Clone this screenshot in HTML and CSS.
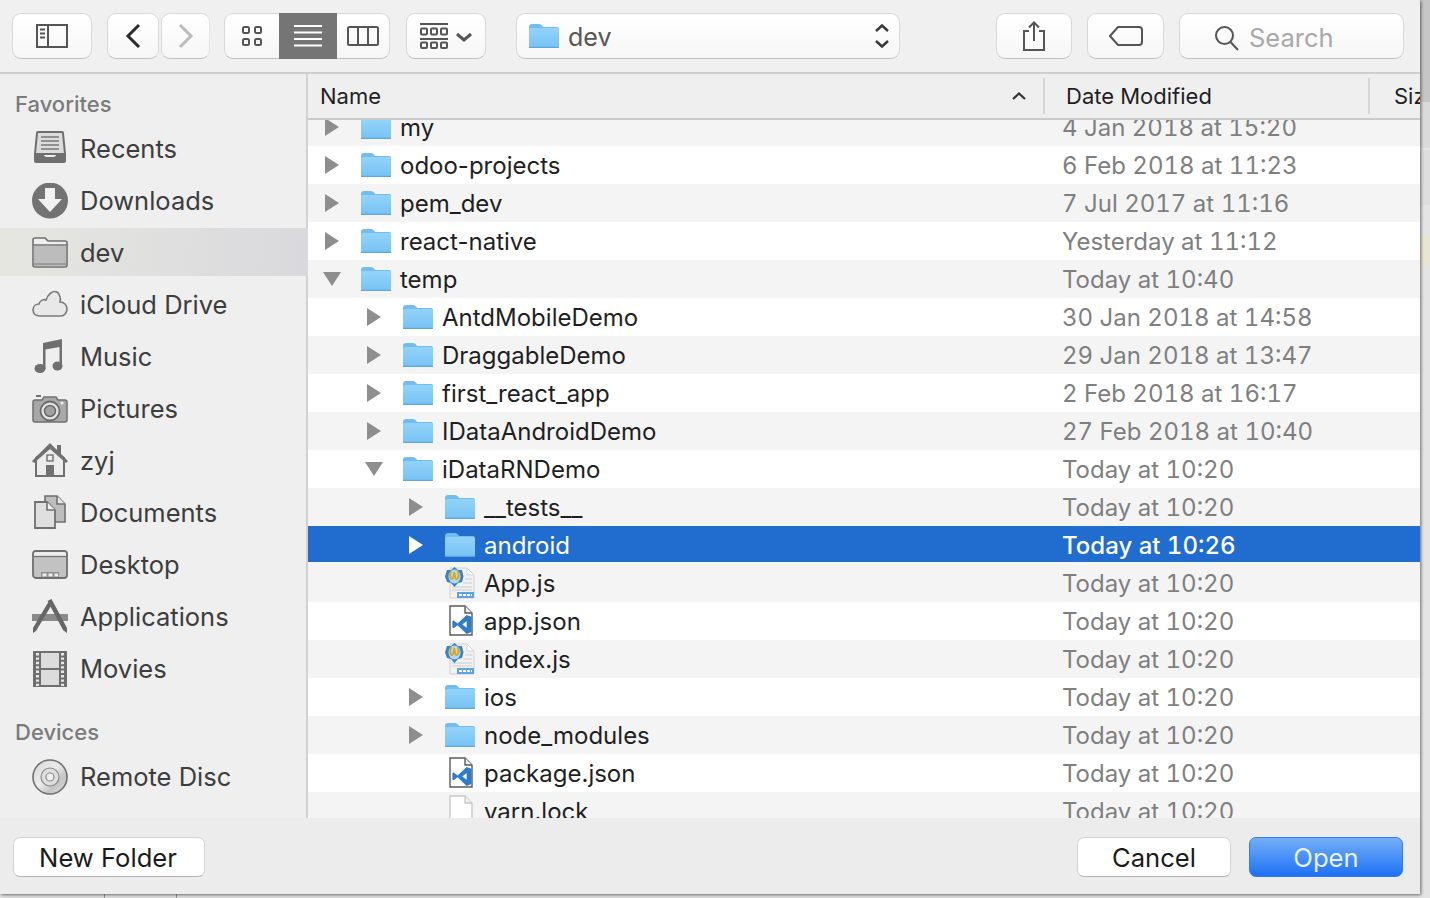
FILE: index.html
```html
<!DOCTYPE html>
<html lang="en">
<head>
<meta charset="UTF-8">
<title>Open - dev</title>
<link rel="stylesheet" href="styles.css">
</head>
<body>

<svg class="sprite" xmlns="http://www.w3.org/2000/svg">
  <defs>
    <linearGradient id="folderBody" x1="0" y1="0" x2="0" y2="1">
      <stop offset="0" stop-color="#93d3fa"/>
      <stop offset="1" stop-color="#78c3f5"/>
    </linearGradient>
    <linearGradient id="discFill" x1="0" y1="0" x2="1" y2="1">
      <stop offset="0" stop-color="#d4d4d4"/>
      <stop offset=".45" stop-color="#ececec"/>
      <stop offset=".7" stop-color="#c4c4c4"/>
      <stop offset="1" stop-color="#e2e2e2"/>
    </linearGradient>
  </defs>

  <!-- list icons -->
  <symbol id="tri" viewBox="0 0 18 18"><path d="M2 0 L16 9 L2 18 Z"/></symbol>
  <symbol id="triDown" viewBox="0 0 18 18"><path d="M0 2 L18 2 L9 16 Z"/></symbol>
  <symbol id="folder" viewBox="0 0 30 24">
    <path d="M0 3 Q0 0 3 0 H10 Q12 0 13 1.5 L14 3 H28 Q30 3 30 5 V22 Q30 24 28 24 H2 Q0 24 0 22 Z" fill="#72bdf0"/>
    <path d="M0 5.5 Q0 4 2 4 H28 Q30 4 30 5.5 V22 Q30 23 28.500 23 H1.500 Q0 23 0 22 Z" fill="url(#folderBody)"/>
    <rect x="0" y="22.800" width="30" height="1.200" rx=".6" fill="#5ea7da"/>
  </symbol>
  <symbol id="jsfile" viewBox="0 0 30 32">
    <path d="M5 1 H22 L29 8 V31 H5 Z" fill="#f1f1f1" stroke="#d2d2d2"/>
    <path d="M22 1 V8 H29 Z" fill="#fff" stroke="#d2d2d2"/>
    <path d="M7 23 H27 M7 20 H27 M18 16 H27 M20 12 H27" stroke="#d9d9d9" stroke-width="1.500"/>
    <path d="M9.500 0 L13 3 H17 L18.500 9.500 L17 15 L13 16 L9.500 20 L6 16 L2 15 L0 9.500 L2 3 H6 Z" fill="#3a80c8"/>
    <ellipse cx="9.500" cy="9.500" rx="6" ry="7" fill="#b4d8f0"/>
    <path d="M6 4 C4 10 6.500 15 8.500 10 C9 4 9.500 4 10 10 C11.500 15 15 10 13 4" fill="none" stroke="#d9a520" stroke-width="1.800"/>
    <rect x="12" y="25" width="17" height="6" fill="#5aa5dc"/>
    <path d="M14 28 H27" stroke="#fff" stroke-width="2" stroke-dasharray="3 1"/>
  </symbol>
  <symbol id="vsfile" viewBox="0 0 30 32">
    <path d="M5 1 H20 L27 8 V30 H5 Z" fill="#fff" stroke="#5b5b5b" stroke-width="1.400"/>
    <path d="M20 1 V8 H27" fill="#eee" stroke="#5b5b5b" stroke-width="1.400"/>
    <path transform="translate(5.5 8) scale(.95)" fill-rule="evenodd" fill="#2f7ccb" d="M17 2 L7.500 11 L3.500 8 L2 8.800 V15.200 L3.500 16 L7.500 13 L17 22 L22 20 V4 Z M17 8.500 V15.500 L12.500 12 Z"/>
  </symbol>
  <symbol id="blankfile" viewBox="0 0 30 32">
    <path d="M5 1 H20 L27 8 V31 H5 Z" fill="#fff" stroke="#c8c8c8" stroke-width="1.400"/>
    <path d="M20 1 V8 H27" fill="#f2f2f2" stroke="#c8c8c8" stroke-width="1.400"/>
  </symbol>

  <!-- sidebar icons -->
  <symbol id="sRecents" viewBox="0 0 36 36">
    <path d="M5 2 Q5 1 6 1 H30 Q31 1 31 2 L33 23 H3 Z" fill="#dcdcdc" stroke="#6e6e6e" stroke-width="2"/>
    <path d="M9 6 H27 M9 10 H27 M9 14 H27 M9 18 H27" stroke="#777" stroke-width="1.500"/>
    <path d="M2 22 H11 Q12 26 15 26 H21 Q24 26 25 22 H34 V30 Q34 32 32 32 H4 Q2 32 2 30 Z" fill="#6f6f6f"/>
  </symbol>
  <symbol id="sDownloads" viewBox="0 0 36 36">
    <circle cx="18" cy="17.500" r="18" fill="#737373"/>
    <path d="M13 5 H23 V16 H30 L18 29 L6 16 H13 Z" fill="#f1f1f1"/>
  </symbol>
  <symbol id="sFolder" viewBox="0 0 36 36">
    <path d="M1 5 Q1 3 3 3 H13 L16 6 H33 Q35 6 35 8 V30 Q35 32 33 32 H3 Q1 32 1 30 Z" fill="#efefef" stroke="#707070" stroke-width="1.600"/>
    <path d="M2 11 H34 V31 H2 Z" fill="#bcbcbc"/>
    <path d="M1.500 10 H34.500" stroke="#707070" stroke-width="1.400"/>
    <path d="M2 29 H34" stroke="#8d8d8d" stroke-width="1.400"/>
  </symbol>
  <symbol id="sCloud" viewBox="0 0 36 36">
    <path d="M8 29 C3 29 1 26 1 23 C1 19 4 17 7 17 C8 13 12 12 14 13 C16 7 21 3 25 5 C28 7 29 12 28 15 C32 15 35 18 35 22 C35 26 32 29 29 29 Z" fill="#e8e8e8" stroke="#7a7a7a" stroke-width="1.600"/>
  </symbol>
  <symbol id="sMusic" viewBox="0 0 36 36">
    <path d="M11 4 L30 0 V27 H27.500 V8 L13.500 10.500 V30 H11 Z" fill="#6f6f6f"/>
    <ellipse cx="8" cy="29.500" rx="5.500" ry="4.500" fill="#6f6f6f"/>
    <ellipse cx="25.500" cy="27" rx="5" ry="4.500" fill="#6f6f6f"/>
  </symbol>
  <symbol id="sCamera" viewBox="0 0 36 36">
    <path d="M3 9 H10 L12 6 H24 L26 9 H33 Q35 9 35 11 V29 Q35 31 33 31 H3 Q1 31 1 29 V11 Q1 9 3 9 Z" fill="#a8a8a8" stroke="#707070" stroke-width="1.500"/>
    <rect x="4" y="4" width="5" height="2" fill="#707070"/>
    <circle cx="18" cy="20" r="9.500" fill="#e4e4e4" stroke="#6a6a6a" stroke-width="1.800"/>
    <circle cx="18" cy="20" r="5.500" fill="#a2a2a2" stroke="#6a6a6a" stroke-width="1.500"/>
    <circle cx="30" cy="12" r="1.500" fill="#eee"/>
  </symbol>
  <symbol id="sHome" viewBox="0 0 36 36">
    <path d="M4 15 V33 H32 V15 L18 4 Z" fill="#ececec" stroke="#707070" stroke-width="2"/>
    <path d="M0 18 L18 0 L25 7 V2 H29 V11 L36 18 L34 20 L18 6 L2 20 Z" fill="#707070"/>
    <rect x="15" y="12" width="6" height="6" fill="#ececec" stroke="#707070" stroke-width="1.400"/>
    <rect x="14" y="22" width="8" height="11" fill="#707070"/>
  </symbol>
  <symbol id="sDocs" viewBox="0 0 36 36">
    <path d="M13 1 H25 L33 9 V27 H13 Z" fill="#bdbdbd" stroke="#707070" stroke-width="1.600"/>
    <path d="M25 1 V9 H33" fill="#e8e8e8" stroke="#707070" stroke-width="1.600"/>
    <path d="M3 7 H15 L23 15 V33 H3 Z" fill="#dfdfdf" stroke="#707070" stroke-width="1.800"/>
    <path d="M15 7 V15 H23" fill="#efefef" stroke="#707070" stroke-width="1.600"/>
  </symbol>
  <symbol id="sDesktop" viewBox="0 0 36 36">
    <rect x="1" y="4" width="34" height="27" rx="3" fill="#c2c2c2" stroke="#6f6f6f" stroke-width="1.800"/>
    <path d="M2 9 V7 Q2 5 4 5 H32 Q34 5 34 7 V9 Z" fill="#ededed"/>
    <path d="M2 9.500 H34" stroke="#6f6f6f" stroke-width="1.200"/>
    <path d="M9 25 H27 V30 H9 Z" fill="#8f8f8f"/>
    <path d="M10.500 28 H26" stroke="#eee" stroke-width="3" stroke-dasharray="4 2"/>
  </symbol>
  <symbol id="sApps" viewBox="0 0 36 36">
    <path d="M0 15 H36 V22 H0 Z" fill="#8a8a8a"/>
    <path d="M14 15 H22 L20.500 11 H15.500 Z" fill="#efefef"/>
    <path d="M1 34 L1 29 L17 2 L20.500 4.500 L4 32 Z" fill="#666"/>
    <path d="M35 34 L35 29 L19.500 0 L15.500 2 L31 31 Z" fill="#666"/>
  </symbol>
  <symbol id="sMovies" viewBox="0 0 36 36">
    <rect x="2" y="1" width="32" height="34" fill="#dcdcdc" stroke="#6f6f6f" stroke-width="2"/>
    <path d="M2 1 H9 V35 H2 Z M27 1 H34 V35 H27 Z" fill="#6f6f6f"/>
    <path d="M5.500 2 V35 M30.500 2 V35" stroke="#e8e8e8" stroke-width="3" stroke-dasharray="2.400 2"/>
    <path d="M9 18 H27" stroke="#6f6f6f" stroke-width="2"/>
  </symbol>
  <symbol id="sDisc" viewBox="0 0 36 36">
    <circle cx="18" cy="18" r="17" fill="url(#discFill)" stroke="#707070" stroke-width="1.600"/>
    <circle cx="18" cy="18" r="9" fill="#dedede" stroke="#8b8b8b" stroke-width="1.200"/>
    <circle cx="18" cy="18" r="4" fill="#efefef" stroke="#8b8b8b" stroke-width="1.200"/>
  </symbol>
</svg>

<div class="window">

  <div class="toolbar">
    <div class="btn btn-sidebar">
      <svg width="32" height="24" viewBox="0 0 32 24"><rect x="1" y="1" width="30" height="22" fill="none" stroke="#555" stroke-width="2"/><path d="M12 1 V23" stroke="#555" stroke-width="2"/><path d="M4 5.500 H9 M4 9.500 H9 M4 13.500 H9" stroke="#555" stroke-width="2"/></svg>
    </div>
    <div class="btn btn-back">
      <svg width="16" height="26" viewBox="0 0 16 26"><path d="M14 2 L3 13 L14 24" fill="none" stroke="#2b2b2b" stroke-width="3"/></svg>
    </div>
    <div class="btn btn-forward">
      <svg width="16" height="26" viewBox="0 0 16 26"><path d="M2 2 L13 13 L2 24" fill="none" stroke="#bcbcbc" stroke-width="3"/></svg>
    </div>
    <div class="seg">
      <div class="seg-item seg-icons">
        <svg width="20" height="20" viewBox="0 0 20 20"><g fill="none" stroke="#555" stroke-width="2"><rect x="1" y="1" width="6" height="6" rx="1.500"/><rect x="13" y="1" width="6" height="6" rx="1.500"/><rect x="1" y="13" width="6" height="6" rx="1.500"/><rect x="13" y="13" width="6" height="6" rx="1.500"/></g></svg>
      </div>
      <div class="seg-item seg-list">
        <svg width="28" height="22" viewBox="0 0 28 22"><path d="M0 1 H28 M0 7.500 H28 M0 14 H28 M0 20.500 H28" stroke="#fff" stroke-width="2"/></svg>
      </div>
      <div class="seg-item seg-columns">
        <svg width="32" height="20" viewBox="0 0 32 20"><rect x="1" y="1" width="30" height="18" rx="1.500" fill="none" stroke="#555" stroke-width="2"/><path d="M11 1 V19 M21 1 V19" stroke="#555" stroke-width="2"/></svg>
      </div>
    </div>
    <div class="btn btn-arrange">
      <svg width="52" height="26" viewBox="0 0 52 26"><g fill="none" stroke="#555" stroke-width="2"><path d="M0 1 H28 M0 16 H28"/><rect x="1" y="5.500" width="6" height="6" rx="1"/><rect x="11" y="5.500" width="6" height="6" rx="1"/><rect x="21" y="5.500" width="6" height="6" rx="1"/><rect x="1" y="19.500" width="6" height="5.500" rx="1"/><rect x="11" y="19.500" width="6" height="5.500" rx="1"/><rect x="21" y="19.500" width="6" height="5.500" rx="1"/><path d="M37 11 L44 17 L51 11" stroke-width="3"/></g></svg>
    </div>
    <div class="btn btn-path">
      <svg class="ico" width="30" height="24"><use href="#folder"/></svg>
      <span class="path-name">dev</span>
      <svg class="path-arrows" width="16" height="24" viewBox="0 0 16 24"><path d="M2 7 L8 1.500 L14 7 M2 17 L8 22.500 L14 17" fill="none" stroke="#3a3a3a" stroke-width="2.500"/></svg>
    </div>
    <div class="btn btn-share">
      <svg width="24" height="30" viewBox="0 0 24 30"><path d="M7 10 H2 V29 H22 V10 H17" fill="none" stroke="#555" stroke-width="2"/><path d="M12 20 V2 M7 6.500 L12 1.500 L17 6.500" fill="none" stroke="#555" stroke-width="2"/></svg>
    </div>
    <div class="btn btn-tag">
      <svg width="34" height="20" viewBox="0 0 34 20"><path d="M9 1 H30 Q33 1 33 4 V16 Q33 19 30 19 H9 L1 10 Z" fill="none" stroke="#555" stroke-width="2"/></svg>
    </div>
    <div class="btn btn-search">
      <svg class="search-ico" width="26" height="26" viewBox="0 0 26 26"><circle cx="10.500" cy="10.500" r="8.500" fill="none" stroke="#555" stroke-width="2"/><path d="M16.500 17 L24 25" stroke="#555" stroke-width="2"/></svg>
      <span class="search-text">Search</span>
    </div>
  </div>

  <div class="main">
    <div class="sidebar">
      <div class="side-title">Favorites</div>
      <div class="side-item"><svg class="side-ico"><use href="#sRecents"/></svg><span class="side-label">Recents</span></div>
      <div class="side-item"><svg class="side-ico"><use href="#sDownloads"/></svg><span class="side-label">Downloads</span></div>
      <div class="side-item active"><svg class="side-ico"><use href="#sFolder"/></svg><span class="side-label">dev</span></div>
      <div class="side-item"><svg class="side-ico"><use href="#sCloud"/></svg><span class="side-label">iCloud Drive</span></div>
      <div class="side-item"><svg class="side-ico"><use href="#sMusic"/></svg><span class="side-label">Music</span></div>
      <div class="side-item"><svg class="side-ico"><use href="#sCamera"/></svg><span class="side-label">Pictures</span></div>
      <div class="side-item"><svg class="side-ico"><use href="#sHome"/></svg><span class="side-label">zyj</span></div>
      <div class="side-item"><svg class="side-ico"><use href="#sDocs"/></svg><span class="side-label">Documents</span></div>
      <div class="side-item"><svg class="side-ico"><use href="#sDesktop"/></svg><span class="side-label">Desktop</span></div>
      <div class="side-item"><svg class="side-ico"><use href="#sApps"/></svg><span class="side-label">Applications</span></div>
      <div class="side-item"><svg class="side-ico"><use href="#sMovies"/></svg><span class="side-label">Movies</span></div>
      <div class="side-title side-devices">Devices</div>
      <div class="side-item"><svg class="side-ico"><use href="#sDisc"/></svg><span class="side-label">Remote Disc</span></div>
    </div>

    <div class="browser">
      <div class="head">
        <div class="col-name">Name
          <svg class="sort" width="14" height="8" viewBox="0 0 14 8"><path d="M1 7 L7 1.500 L13 7" fill="none" stroke="#333" stroke-width="2.200"/></svg>
        </div>
        <div class="col-date">Date Modified</div>
        <div class="col-size">Size</div>
      </div>
      <div class="list">
        <div class="rows">
          <div class="row alt l0"><div class="cell"><svg class="tri"><use href="#tri"/></svg><svg class="ico"><use href="#folder"/></svg><span class="name">my</span></div><div class="date">4 Jan 2018 at 15:20</div></div>
          <div class="row l0"><div class="cell"><svg class="tri"><use href="#tri"/></svg><svg class="ico"><use href="#folder"/></svg><span class="name">odoo-projects</span></div><div class="date">6 Feb 2018 at 11:23</div></div>
          <div class="row alt l0"><div class="cell"><svg class="tri"><use href="#tri"/></svg><svg class="ico"><use href="#folder"/></svg><span class="name">pem_dev</span></div><div class="date">7 Jul 2017 at 11:16</div></div>
          <div class="row l0"><div class="cell"><svg class="tri"><use href="#tri"/></svg><svg class="ico"><use href="#folder"/></svg><span class="name">react-native</span></div><div class="date">Yesterday at 11:12</div></div>
          <div class="row alt l0"><div class="cell"><svg class="tri"><use href="#triDown"/></svg><svg class="ico"><use href="#folder"/></svg><span class="name">temp</span></div><div class="date">Today at 10:40</div></div>
          <div class="row l1"><div class="cell"><svg class="tri"><use href="#tri"/></svg><svg class="ico"><use href="#folder"/></svg><span class="name">AntdMobileDemo</span></div><div class="date">30 Jan 2018 at 14:58</div></div>
          <div class="row alt l1"><div class="cell"><svg class="tri"><use href="#tri"/></svg><svg class="ico"><use href="#folder"/></svg><span class="name">DraggableDemo</span></div><div class="date">29 Jan 2018 at 13:47</div></div>
          <div class="row l1"><div class="cell"><svg class="tri"><use href="#tri"/></svg><svg class="ico"><use href="#folder"/></svg><span class="name">first_react_app</span></div><div class="date">2 Feb 2018 at 16:17</div></div>
          <div class="row alt l1"><div class="cell"><svg class="tri"><use href="#tri"/></svg><svg class="ico"><use href="#folder"/></svg><span class="name">IDataAndroidDemo</span></div><div class="date">27 Feb 2018 at 10:40</div></div>
          <div class="row l1"><div class="cell"><svg class="tri"><use href="#triDown"/></svg><svg class="ico"><use href="#folder"/></svg><span class="name">iDataRNDemo</span></div><div class="date">Today at 10:20</div></div>
          <div class="row alt l2"><div class="cell"><svg class="tri"><use href="#tri"/></svg><svg class="ico"><use href="#folder"/></svg><span class="name">__tests__</span></div><div class="date">Today at 10:20</div></div>
          <div class="row selected l2"><div class="cell"><svg class="tri"><use href="#tri"/></svg><svg class="ico"><use href="#folder"/></svg><span class="name">android</span></div><div class="date">Today at 10:26</div></div>
          <div class="row alt l2"><div class="cell"><span class="tri"></span><svg class="ico ico-file"><use href="#jsfile"/></svg><span class="name">App.js</span></div><div class="date">Today at 10:20</div></div>
          <div class="row l2"><div class="cell"><span class="tri"></span><svg class="ico ico-file"><use href="#vsfile"/></svg><span class="name">app.json</span></div><div class="date">Today at 10:20</div></div>
          <div class="row alt l2"><div class="cell"><span class="tri"></span><svg class="ico ico-file"><use href="#jsfile"/></svg><span class="name">index.js</span></div><div class="date">Today at 10:20</div></div>
          <div class="row l2"><div class="cell"><svg class="tri"><use href="#tri"/></svg><svg class="ico"><use href="#folder"/></svg><span class="name">ios</span></div><div class="date">Today at 10:20</div></div>
          <div class="row alt l2"><div class="cell"><svg class="tri"><use href="#tri"/></svg><svg class="ico"><use href="#folder"/></svg><span class="name">node_modules</span></div><div class="date">Today at 10:20</div></div>
          <div class="row l2"><div class="cell"><span class="tri"></span><svg class="ico ico-file"><use href="#vsfile"/></svg><span class="name">package.json</span></div><div class="date">Today at 10:20</div></div>
          <div class="row alt l2"><div class="cell"><span class="tri"></span><svg class="ico ico-file"><use href="#blankfile"/></svg><span class="name">yarn.lock</span></div><div class="date">Today at 10:20</div></div>
        </div>
      </div>
    </div>
  </div>

  <div class="footer">
    <div class="push push-new">New Folder</div>
    <div class="footer-right">
      <div class="push push-cancel">Cancel</div>
      <div class="push push-open">Open</div>
    </div>
  </div>

</div>
</body>
</html>
```

FILE: styles.css
```css
body {
  margin: 0;
  height: 898px;
  overflow: hidden;
  font-family: "Inter", "Liberation Sans", sans-serif;
  font-size: 25.5px;
  color: #222;
  background:
    linear-gradient(#9c9c9c, #9c9c9c) left 104px bottom 0 / 1px 4px no-repeat,
    linear-gradient(#9c9c9c, #9c9c9c) left 176px bottom 0 / 1px 4px no-repeat,
    linear-gradient(#c6c6c6, #c6c6c6) right 0 top 0 / 10px 102px no-repeat,
    linear-gradient(#dadada, #dadada) right 0 top 102px / 10px 46px no-repeat,
    linear-gradient(#dedede, #dedede) right 0 top 150px / 10px 55px no-repeat,
    linear-gradient(#e9e5d5, #e9e5d5) right 0 top 236px / 10px 30px no-repeat,
    #e4e4e4;
}
.sprite {
  display: block;
  width: 0;
  height: 0;
}
.window {
  width: 1420px;
  height: 894px;
  display: flex;
  flex-direction: column;
  background: #efefef;
  box-shadow: 1px 1px 3px rgba(0,0,0,0.55);
}

/* toolbar */
.toolbar {
  height: 72px;
  box-sizing: border-box;
  flex: none;
  display: flex;
  align-items: flex-start;
  padding: 13px 16px 0 12px;
  background: #f0f0f0;
}
.btn {
  height: 46px;
  box-sizing: border-box;
  display: flex;
  align-items: center;
  justify-content: center;
  background: linear-gradient(#ffffff, #f6f6f6);
  border: 1px solid #d8d8d8;
  border-bottom-color: #c0c0c0;
  border-radius: 9px;
  flex: none;
}
.btn-sidebar { width: 80px; margin-right: 15px; }
.btn-back { width: 52px; margin-right: 2px; }
.btn-forward { width: 49px; margin-right: 14px; border-right-color: #e4e4e4; }
.btn-arrange { width: 80px; margin-left: 16px; margin-right: 30px; }
.btn-path {
  width: 384px;
  justify-content: flex-start;
  padding: 0 9px 0 12px;
  margin-right: 96px;
}
.btn-path .ico { margin-right: 0; }
.path-name {
  margin-left: 9px;
  padding-top: 2px;
  color: #565656;
  font-size: 25px;
}
.path-arrows { margin-left: auto; }
.btn-share { width: 76px; margin-right: 15px; }
.btn-tag { width: 77px; margin-right: 15px; }
.btn-search {
  width: 225px;
  justify-content: flex-start;
  padding-left: 34px;
}
.search-ico { margin-top: 3px; }
.search-text {
  margin-left: 9px;
  padding-top: 2px;
  color: #a9a9a9;
  font-size: 25.5px;
}
.seg {
  width: 166px;
  height: 46px;
  box-sizing: border-box;
  display: flex;
  flex: none;
  background: linear-gradient(#ffffff, #f6f6f6);
  border: 1px solid #d8d8d8;
  border-bottom-color: #c0c0c0;
  border-radius: 9px;
}
.seg-item {
  display: flex;
  align-items: center;
  justify-content: center;
}
.seg-icons { width: 54px; }
.seg-list {
  width: 58px;
  background: #757575;
  margin: -1px 0;
}
.seg-columns { flex: 1; }

/* main area */
.main {
  height: 746px;
  flex: none;
  display: flex;
  border-top: 2px solid #cfcfcf;
  box-sizing: border-box;
}
.sidebar {
  width: 308px;
  box-sizing: border-box;
  flex: none;
  background: #efefef;
  border-right: 2px solid #d2d2d2;
  padding-top: 17px;
  color: #3d3d3d;
}
.side-title {
  height: 26px;
  line-height: 26px;
  padding-left: 15px;
  margin-bottom: 8px;
  font-size: 22px;
  font-weight: 500;
  color: #7b7b7b;
}
.side-devices {
  margin-top: 26px;
  margin-bottom: 0;
}
.side-item {
  height: 48px;
  margin-bottom: 4px;
  display: flex;
  align-items: center;
  padding-left: 32px;
  box-sizing: border-box;
}
.side-label { padding-bottom: 2px; }
.side-item.active {
  background: linear-gradient(100deg, #e6e6e1, #d9d9dd);
  margin-top: -1px;
  margin-right: -2px;
  margin-bottom: 5px;
  padding-top: 2px;
  position: relative;
}
.side-ico {
  width: 36px;
  height: 36px;
  flex: none;
  margin-right: 12px;
}
.side-devices + .side-item { margin-top: 8px; }

/* file list */
.browser {
  flex: 1;
  min-width: 0;
  display: flex;
  flex-direction: column;
  background: #fff;
}
.head {
  height: 46px;
  flex: none;
  box-sizing: border-box;
  display: flex;
  align-items: center;
  overflow: hidden;
  background: #efefef;
  border-bottom: 2px solid #c9c9c9;
  color: #1f1f1f;
  font-size: 22px;
  white-space: nowrap;
}
.col-name, .col-date, .col-size {
  height: 36px;
  line-height: 36px;
  flex: none;
}
.col-name {
  width: 706px;
  display: flex;
  align-items: center;
  justify-content: space-between;
  padding: 0 17px 0 12px;
  border-right: 2px solid #d6d6d6;
}
.col-date {
  width: 302px;
  padding-left: 21px;
  border-right: 2px solid #d6d6d6;
}
.col-size { padding-left: 24px; }
.list {
  flex: 1;
  min-height: 0;
  overflow: hidden;
}
.rows { margin-top: -12px; }
.row {
  height: 38px;
  display: flex;
  align-items: center;
  white-space: nowrap;
  color: #1f1f1f;
  font-size: 24px;
}
.alt { background: #f4f4f4; }
.cell {
  width: 754px;
  flex: none;
  box-sizing: border-box;
  display: flex;
  align-items: center;
}
.l0 .cell { padding-left: 15px; }
.l1 .cell { padding-left: 57px; }
.l2 .cell { padding-left: 99px; }
.tri {
  width: 18px;
  height: 18px;
  flex: none;
  margin-right: 20px;
  fill: #8e8e8e;
}
.ico {
  width: 30px;
  height: 24px;
  flex: none;
  margin-right: 9px;
}
.ico-file {
  height: 32px;
  margin-top: -1px;
}
.date {
  color: #7f7f7f;
  font-variant-numeric: tabular-nums;
}
.selected {
  background: linear-gradient(#206ccf 36px, #f4f4f4 36px);
  color: #fff;
}
.selected .tri { fill: #fff; }
.selected .date { color: #fff; font-weight: 500; }

/* bottom bar */
.footer {
  flex: 1;
  display: flex;
  justify-content: space-between;
  align-items: flex-start;
  padding: 19px 17px 0 13px;
  background: #ececec;
}
.footer-right {
  display: flex;
  gap: 18px;
}
.push {
  height: 40px;
  box-sizing: border-box;
  display: flex;
  align-items: center;
  justify-content: center;
  border-radius: 7px;
  background: #fff;
  border: 1px solid #d4d4d4;
  border-bottom-color: #b4b4b4;
  color: #1b1b1b;
  font-size: 25.6px;
}
.push-new { width: 192px; padding-right: 2px; }
.push-cancel { width: 154px; }
.push-open {
  width: 154px;
  border: 1px solid #2f7df0;
  background: linear-gradient(#74aff6, #1e70f6);
  color: #e8f1fe;
}
```
